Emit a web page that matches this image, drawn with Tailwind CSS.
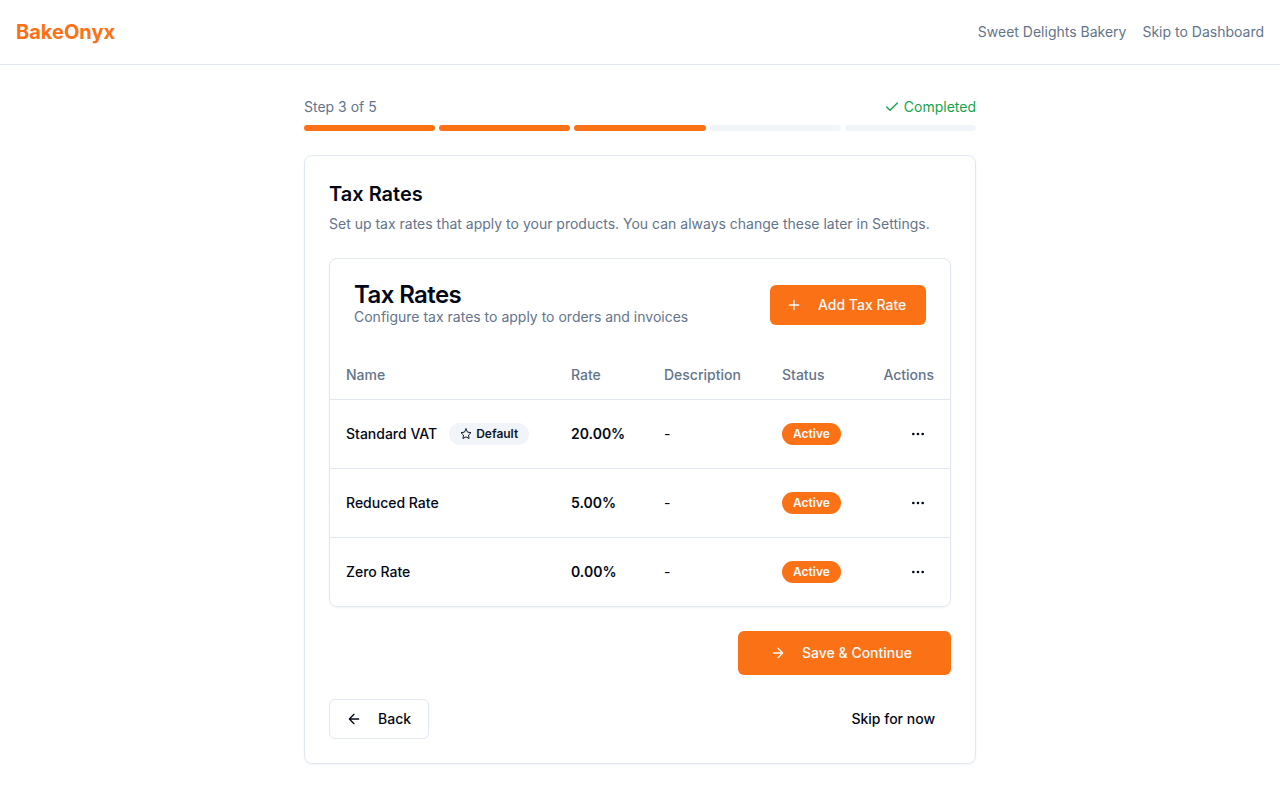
<!DOCTYPE html>
<html lang="en">

<head>
    <meta charset="UTF-8">
    <meta name="viewport" content="width=device-width, initial-scale=1.0">
    <script src="https://cdn.jsdelivr.net/npm/@tailwindcss/browser@4"></script>
    <title>BakeOnyx - Tax Rates</title>
</head>

<body class="bg-white font-[Inter,sans-serif] text-[#020817] min-h-screen">
    <!-- Header -->
    <header class="border-b border-[#e2e8f0]">
        <div class="flex h-16 items-center justify-between px-4">
            <a href="#" class="text-xl font-bold text-[#fb7116]">BakeOnyx</a>
            <div class="flex items-center gap-4 text-sm text-[#64748b]">
                <span>Sweet Delights Bakery</span>
                <a href="#" class="hover:text-[#020817]">Skip to Dashboard</a>
            </div>
        </div>
    </header>

    <main class="mx-auto max-w-2xl py-8">
        <!-- Progress -->
        <div class="mb-6">
            <div class="mb-2 flex items-center justify-between text-sm">
                <span class="text-[#64748b]">Step 3 of 5</span>
                <span class="flex items-center gap-1 text-[#16a34a]">
                    <svg class="size-4" viewBox="0 0 24 24" fill="none" stroke="currentColor" stroke-width="2" stroke-linecap="round" stroke-linejoin="round"><path d="M20 6 9 17l-5-5" /></svg>
                    Completed
                </span>
            </div>
            <div class="flex gap-1">
                <div class="h-1.5 flex-1 rounded-full bg-[#fb7116]"></div>
                <div class="h-1.5 flex-1 rounded-full bg-[#fb7116]"></div>
                <div class="h-1.5 flex-1 rounded-full bg-[#fb7116]"></div>
                <div class="h-1.5 flex-1 rounded-full bg-[#f1f5f9]"></div>
                <div class="h-1.5 flex-1 rounded-full bg-[#f1f5f9]"></div>
            </div>
        </div>

        <!-- Step card -->
        <section class="rounded-lg border border-[#e2e8f0] p-6 shadow-xs">
            <h1 class="text-xl font-semibold">Tax Rates</h1>
            <p class="mt-1 text-sm leading-6 text-[#64748b]">Set up tax rates that apply to your products. You can always change these later in Settings.</p>

            <div class="mt-5.5 rounded-lg border border-[#e2e8f0] shadow-xs">
                <div class="flex items-center justify-between p-6">
                    <div>
                        <h2 class="text-2xl leading-6 font-semibold tracking-tight">Tax Rates</h2>
                        <p class="text-sm text-[#64748b]">Configure tax rates to apply to orders and invoices</p>
                    </div>
                    <button type="button" class="flex h-10 min-w-39 items-center gap-4 rounded-md bg-[#fb7116] px-4 text-sm font-medium text-[#f8fafc]">
                        <svg class="size-4" viewBox="0 0 24 24" fill="none" stroke="currentColor" stroke-width="2" stroke-linecap="round" stroke-linejoin="round"><path d="M5 12h14M12 5v14" /></svg>
                        Add Tax Rate
                    </button>
                </div>

                <table class="w-full table-fixed text-sm">
                    <thead>
                        <tr class="h-12 border-b border-[#e2e8f0] text-left text-[#64748b]">
                            <th class="w-[225px] px-4 font-medium">Name</th>
                            <th class="w-[93px] px-4 font-medium">Rate</th>
                            <th class="w-[118px] px-4 font-medium">Description</th>
                            <th class="w-[92px] px-4 font-medium">Status</th>
                            <th class="px-4 text-right font-medium">Actions</th>
                        </tr>
                    </thead>
                    <tbody>
                        <tr class="h-[69px] border-b border-[#e2e8f0]">
                            <td class="px-4 font-medium">
                                <div class="flex items-center gap-3">
                                    Standard VAT
                                    <span class="flex items-center gap-1 rounded-full border border-transparent bg-[#f1f5f9] px-2.5 py-0.5 text-xs font-semibold text-[#0f172a]">
                                        <svg class="size-3" viewBox="0 0 24 24" fill="none" stroke="currentColor" stroke-width="2" stroke-linecap="round" stroke-linejoin="round"><path d="M12 2l3.09 6.26L22 9.27l-5 4.87 1.18 6.88L12 17.77l-6.18 3.25L7 14.14 2 9.27l6.91-1.01L12 2z" /></svg>
                                        Default
                                    </span>
                                </div>
                            </td>
                            <td class="px-4 font-semibold">20.00%</td>
                            <td class="px-4">-</td>
                            <td class="px-4"><span class="inline-flex rounded-full border border-transparent bg-[#fb7116] px-2.5 py-0.5 text-xs font-semibold text-[#f8fafc]">Active</span></td>
                            <td class="px-4">
                                <button type="button" aria-label="Actions for Standard VAT" class="ml-auto flex h-9 w-8 items-center justify-center rounded-md">
                                    <svg class="size-4" viewBox="0 0 24 24" fill="none" stroke="currentColor" stroke-width="2"><circle cx="12" cy="12" r="1" /><circle cx="19" cy="12" r="1" /><circle cx="5" cy="12" r="1" /></svg>
                                </button>
                            </td>
                        </tr>
                        <tr class="h-[69px] border-b border-[#e2e8f0]">
                            <td class="px-4 font-medium">Reduced Rate</td>
                            <td class="px-4 font-semibold">5.00%</td>
                            <td class="px-4">-</td>
                            <td class="px-4"><span class="inline-flex rounded-full border border-transparent bg-[#fb7116] px-2.5 py-0.5 text-xs font-semibold text-[#f8fafc]">Active</span></td>
                            <td class="px-4">
                                <button type="button" aria-label="Actions for Reduced Rate" class="ml-auto flex h-9 w-8 items-center justify-center rounded-md">
                                    <svg class="size-4" viewBox="0 0 24 24" fill="none" stroke="currentColor" stroke-width="2"><circle cx="12" cy="12" r="1" /><circle cx="19" cy="12" r="1" /><circle cx="5" cy="12" r="1" /></svg>
                                </button>
                            </td>
                        </tr>
                        <tr class="h-[69px]">
                            <td class="px-4 font-medium">Zero Rate</td>
                            <td class="px-4 font-semibold">0.00%</td>
                            <td class="px-4">-</td>
                            <td class="px-4"><span class="inline-flex rounded-full border border-transparent bg-[#fb7116] px-2.5 py-0.5 text-xs font-semibold text-[#f8fafc]">Active</span></td>
                            <td class="px-4">
                                <button type="button" aria-label="Actions for Zero Rate" class="ml-auto flex h-9 w-8 items-center justify-center rounded-md">
                                    <svg class="size-4" viewBox="0 0 24 24" fill="none" stroke="currentColor" stroke-width="2"><circle cx="12" cy="12" r="1" /><circle cx="19" cy="12" r="1" /><circle cx="5" cy="12" r="1" /></svg>
                                </button>
                            </td>
                        </tr>
                    </tbody>
                </table>
            </div>

            <div class="mt-6 flex justify-end">
                <button type="button" class="flex h-11 min-w-[213px] items-center gap-4 rounded-md bg-[#fb7116] px-8 text-sm font-medium text-[#f8fafc]">
                    <svg class="size-4" viewBox="0 0 24 24" fill="none" stroke="currentColor" stroke-width="2" stroke-linecap="round" stroke-linejoin="round"><path d="M5 12h14M12 5l7 7-7 7" /></svg>
                    Save &amp; Continue
                </button>
            </div>

            <!-- Step navigation -->
            <div class="mt-6 flex items-center justify-between">
                <button type="button" class="flex h-10 min-w-25 items-center gap-4 rounded-md border border-[#e2e8f0] px-4 text-sm font-medium">
                    <svg class="size-4" viewBox="0 0 24 24" fill="none" stroke="currentColor" stroke-width="2" stroke-linecap="round" stroke-linejoin="round"><path d="M12 19l-7-7 7-7M19 12H5" /></svg>
                    Back
                </button>
                <button type="button" class="h-10 rounded-md px-4 text-sm font-medium">Skip for now</button>
            </div>
        </section>
    </main>
</body>

</html>
